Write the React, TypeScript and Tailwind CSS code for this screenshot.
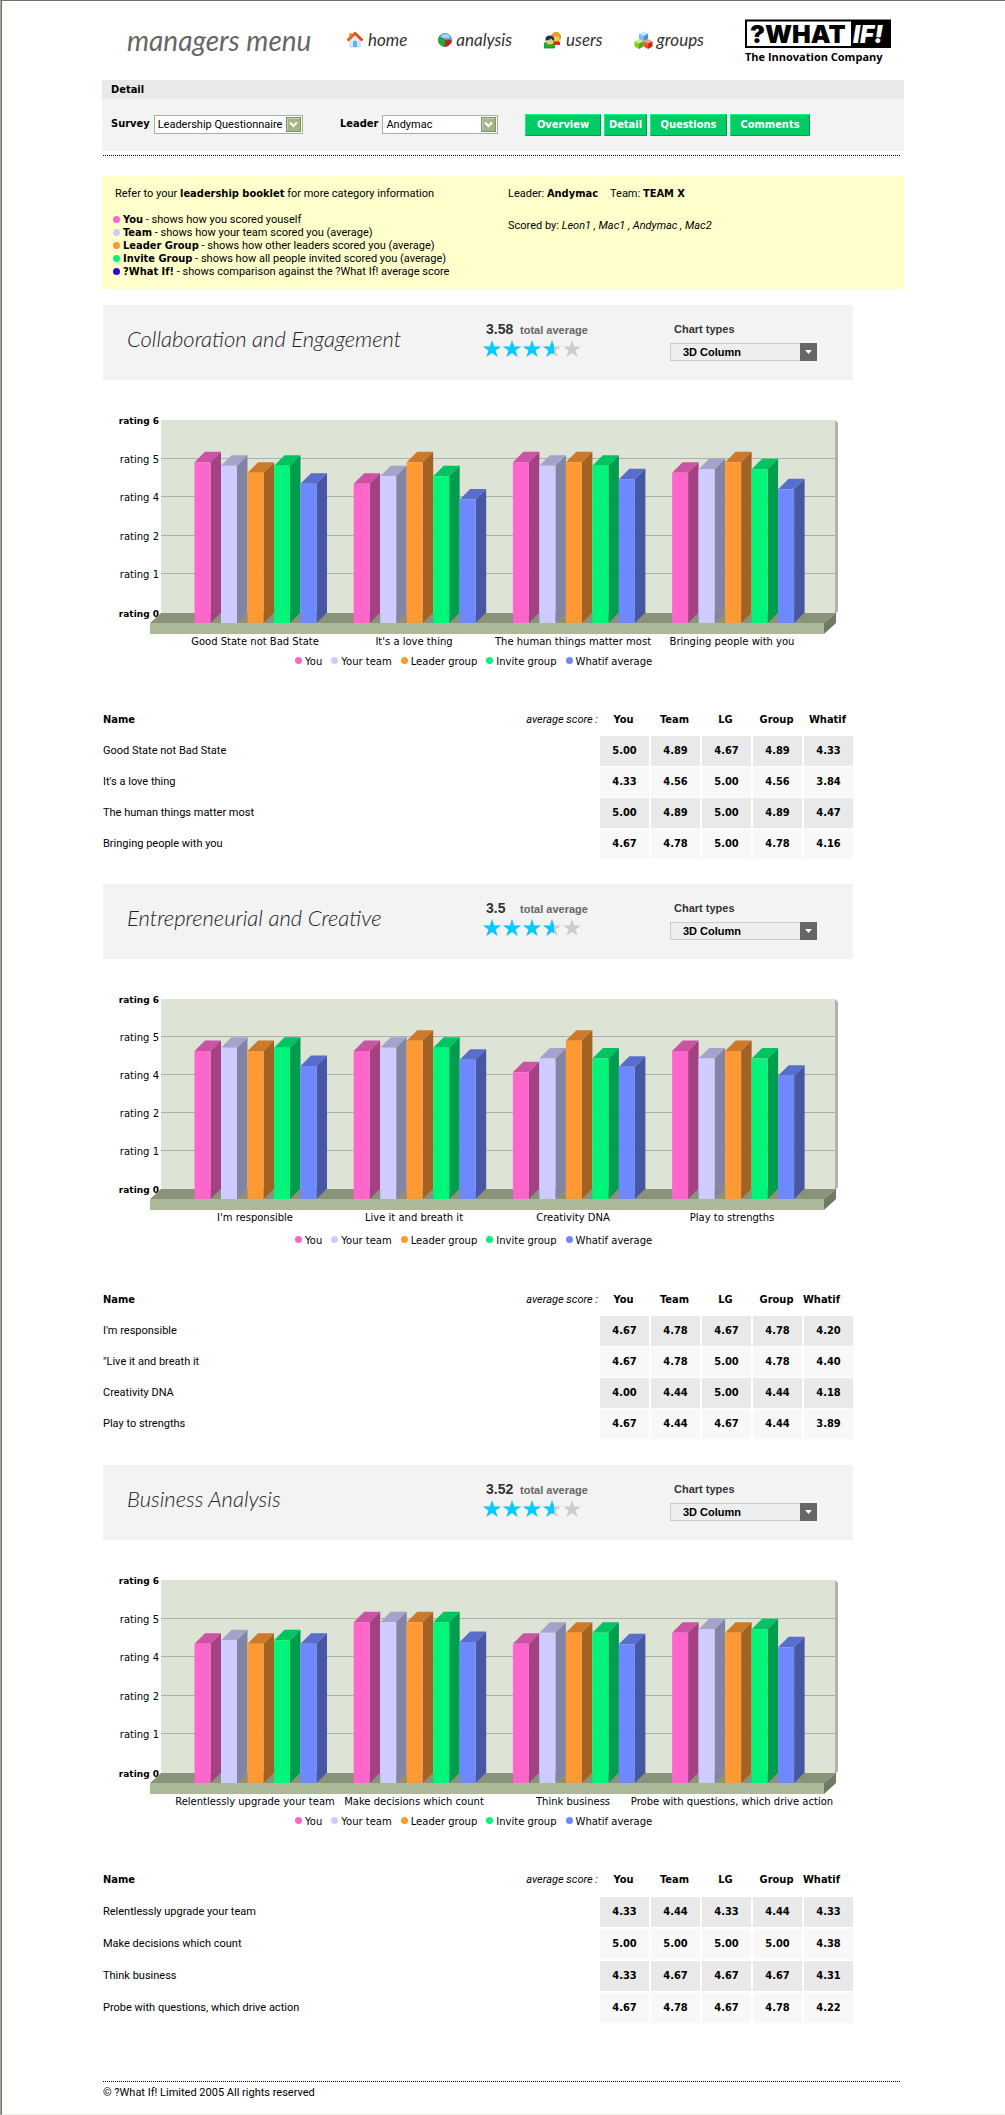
import type { ReactNode } from "react";

type Row = { name: string; label: string; values: number[] };
type Survey = {
  title: string;
  average: string;
  ceiling: number;
  rows: Row[];
  spacing: string;
  lastHead: string;
};

const series = [
  { name: "You", front: "#ff66cc", top: "#cc52a3", side: "#a34182" },
  { name: "Your team", front: "#ccccff", top: "#a3a3cc", side: "#8383a4" },
  { name: "Leader group", front: "#ff9933", top: "#cc7a29", side: "#a36221" },
  { name: "Invite group", front: "#00f57a", top: "#00c462", side: "#009d4e" },
  { name: "Whatif average", front: "#6e89ff", top: "#586ecc", side: "#4757a3" },
];

const surveys: Survey[] = [
  {
    title: "Collaboration and Engagement",
    average: "3.58",
    ceiling: 193,
    spacing: "mt-9 mb-6 border-spacing-y-px",
    lastHead: "",
    rows: [
      { name: "Good State not Bad State", label: "Good State not Bad State", values: [5, 4.89, 4.67, 4.89, 4.33] },
      { name: "It's a love thing", label: "It's a love thing", values: [4.33, 4.56, 5, 4.56, 3.84] },
      { name: "The human things matter most", label: "The human things matter most", values: [5, 4.89, 5, 4.89, 4.47] },
      { name: "Bringing people with you", label: "Bringing people with you", values: [4.67, 4.78, 5, 4.78, 4.16] },
    ],
  },
  {
    title: "Entrepreneurial and Creative",
    average: "3.5",
    ceiling: 190,
    spacing: "mt-[37px] mb-[25px] border-spacing-y-px",
    lastHead: "pr-3",
    rows: [
      { name: "I'm responsible", label: "I'm responsible", values: [4.67, 4.78, 4.67, 4.78, 4.2] },
      { name: "\"Live it and breath it", label: "Live it and breath it", values: [4.67, 4.78, 5, 4.78, 4.4] },
      { name: "Creativity DNA", label: "Creativity DNA", values: [4, 4.44, 5, 4.44, 4.18] },
      { name: "Play to strengths", label: "Play to strengths", values: [4.67, 4.44, 4.67, 4.44, 3.89] },
    ],
  },
  {
    title: "Business Analysis",
    average: "3.52",
    ceiling: 193,
    spacing: "mt-[35px] border-spacing-y-[2px]",
    lastHead: "pr-3",
    rows: [
      { name: "Relentlessly upgrade your team", label: "Relentlessly upgrade your team", values: [4.33, 4.44, 4.33, 4.44, 4.33] },
      { name: "Make decisions which count", label: "Make decisions which count", values: [5, 5, 5, 5, 4.38] },
      { name: "Think business", label: "Think business", values: [4.33, 4.67, 4.67, 4.67, 4.31] },
      { name: "Probe with questions, which drive action", label: "Probe with questions, which drive action", values: [4.67, 4.78, 4.67, 4.78, 4.22] },
    ],
  },
];

function Strong({ children }: { children: ReactNode }) {
  return <b className="font-['DejaVu_Sans_Condensed',sans-serif]">{children}</b>;
}

function HomeIcon() {
  return (
    <svg width="18" height="18" viewBox="0 0 18 18" aria-hidden="true">
      <path d="M3 2h3v5H3z" fill="#f0b429" />
      <path d="M4 9l5-5 5 5v7H4z" fill="#dfeaf6" stroke="#b9c8da" strokeWidth=".8" />
      <path d="M7 16v-4.5a2 2 0 0 1 4 0V16z" fill="#58b4ee" />
      <path d="M1.5 9.5L9 2.2l7.5 7.3" fill="none" stroke="#e8451a" strokeWidth="2.6" strokeLinejoin="round" />
      <path d="M2 8.6L9 2" stroke="#f58a3a" strokeWidth="1" />
    </svg>
  );
}

function PieIcon() {
  return (
    <svg width="14" height="16" viewBox="0 0 14 16" aria-hidden="true">
      <circle cx="7" cy="8" r="6.8" fill="#5cadea" />
      <path d="M7 8V14.8A6.8 6.8 0 0 1 1.2 4.5z" fill="#22b022" />
      <path d="M7 8h6.8A6.8 6.8 0 0 1 7 14.8z" fill="#e01515" />
      <path d="M1.2 4.5L7 8h6.8M7 8v6.8" fill="none" stroke="#35606c" strokeWidth=".6" />
      <ellipse cx="7.6" cy="4" rx="4.4" ry="2.2" fill="#b9e0fa" opacity=".8" />
      <circle cx="7" cy="8" r="6.5" fill="none" stroke="#3f7c9a" strokeWidth=".6" />
    </svg>
  );
}

function UsersIcon() {
  return (
    <svg width="19" height="18" viewBox="0 0 19 18" aria-hidden="true">
      <path d="M9 14v-3q4-3 8 0v3z" fill="#e3262a" />
      <circle cx="13" cy="6" r="4.6" fill="#fbd04a" stroke="#cf7d12" strokeWidth=".8" />
      <path d="M9 4q4-4.500 8 0l1 4q-3-4-9-2z" fill="#f39a1e" />
      <path d="M1.400 17v-5q5-3 10 0v5z" fill="#27ad27" stroke="#118a1d" strokeWidth=".8" />
      <circle cx="6.800" cy="9.500" r="4" fill="#fcc27c" />
      <path d="M2.400 9.500Q2 4.500 7 4.600q5 .4 4.200 5.400-2-.4-3-2.400-2 2-5.800 1.900z" fill="#17375e" />
    </svg>
  );
}

function Cube({ x, y, light, mid, dark }: { x: number; y: number; light: string; mid: string; dark: string }) {
  return (
    <g transform={`translate(${x} ${y})`}>
      <path d="M4.500 0L9 2.200 4.500 4.600 0 2.200z" fill={light} />
      <path d="M0 2.200l4.500 2.400V10L0 7.600z" fill={mid} />
      <path d="M9 2.200L4.500 4.600V10L9 7.600z" fill={dark} />
    </g>
  );
}

function GroupsIcon() {
  return (
    <svg width="19" height="19" viewBox="0 0 19 19" aria-hidden="true">
      <Cube x={5} y={0.5} light="#c4e6ff" mid="#7cbcf5" dark="#4b8fe0" />
      <Cube x={0.5} y={8} light="#c8f08a" mid="#7ed321" dark="#4fa90f" />
      <Cube x={9.5} y={8} light="#ff9c7c" mid="#f2502a" dark="#cc2a10" />
    </svg>
  );
}

function Logo() {
  return (
    <svg width="146" height="48" viewBox="0 0 146 48" role="img" aria-label="?What If! The Innovation Company">
      <rect x="1" y="1.500" width="144" height="26.500" fill="#fff" stroke="#000" strokeWidth="2" />
      <path d="M106 1h39v27h-39z" fill="#000" />
      <text x="5" y="24" fontFamily="Inter, sans-serif" fontWeight="900" fontSize="25">?WHAT</text>
      <text x="108" y="24" fontFamily="Inter, sans-serif" fontWeight="900" fontStyle="italic" fontSize="24" fill="#fff">IF!</text>
      <text x="0" y="42" fontFamily="'Open Sans', sans-serif" fontWeight="700" fontSize="11">The Innovation Company</text>
    </svg>
  );
}

const nav = [
  { name: "home", icon: <HomeIcon />, gap: "mr-[31px]" },
  { name: "analysis", icon: <PieIcon />, gap: "mr-[31px]" },
  { name: "users", icon: <UsersIcon />, gap: "mr-[31px]" },
  { name: "groups", icon: <GroupsIcon />, gap: "" },
];

function Header() {
  return (
    <header className="flex h-[79px] items-start pl-[25px]">
      <h1 className="mt-[22px] w-[219px] font-[Lato,sans-serif] text-[28px] leading-[34px] text-[#666] italic">managers menu</h1>
      <nav className="mt-[27px] flex flex-1 items-center">
        {nav.map((n) => (
          <a key={n.name} href={`#${n.name}`} className={`flex items-center gap-1 font-[Lato,sans-serif] text-[17px] leading-6 text-[#333] italic ${n.gap}`}>
            {n.icon}
            {n.name}
          </a>
        ))}
      </nav>
      <div className="mt-[18px] mr-[13px]">
        <Logo />
      </div>
    </header>
  );
}

function FilterSelect({ id, label, option, width }: { id: string; label: string; option: string; width: string }) {
  return (
    <div className="flex items-center gap-1">
      <label htmlFor={id} className="font-['DejaVu_Sans_Condensed',sans-serif] text-[11px] font-bold">{label}</label>
      <div className={`relative ${width}`}>
        <select id={id} className="block h-[19px] w-full appearance-none border border-[#a5b883] bg-white pl-[3px] font-[Roboto,sans-serif] text-[11px] leading-[16px]">
          <option>{option}</option>
        </select>
        <svg className="pointer-events-none absolute top-[2px] right-[2px]" width="15" height="15" viewBox="0 0 15 15" aria-hidden="true">
          <rect x=".5" y=".5" width="14" height="14" fill="#a3b583" stroke="#7f9468" />
          <path d="M1.500 13.500v-12h12" fill="none" stroke="#c3cfae" />
          <path d="M4 5.500l3.500 3.500L11 5.500" fill="none" stroke="#fff" strokeWidth="2.200" />
        </svg>
      </div>
    </div>
  );
}

const tabs = [
  { name: "Overview", width: "w-[76px]" },
  { name: "Detail", width: "w-[43px]" },
  { name: "Questions", width: "w-[77px]" },
  { name: "Comments", width: "w-[80px]" },
];

function Filters() {
  return (
    <section>
      <h2 className="h-[19px] bg-[#e9e9e9] pl-[9px] font-['DejaVu_Sans_Condensed',sans-serif] text-[11px] leading-5 font-bold">Detail</h2>
      <div className="flex h-[52px] items-start bg-[#f3f3f3] pt-[15px] pl-[9px]">
        <div className="w-[229px] pt-px">
          <FilterSelect id="survey" label="Survey" option="Leadership Questionnaire" width="w-[149px]" />
        </div>
        <div className="w-[185px] pt-px">
          <FilterSelect id="leader" label="Leader" option="Andymac" width="w-[116px]" />
        </div>
        <div className="flex gap-[3px]">
          {tabs.map((t) => (
            <button key={t.name} type="button" className={`h-[22px] border border-t-[#00ff80] border-r-[#009d55] border-b-[#009d55] border-l-[#00ff80] bg-[#00cc66] font-['DejaVu_Sans_Condensed',sans-serif] text-[11px] leading-[18px] font-bold text-white ${t.width}`}>
              {t.name}
            </button>
          ))}
        </div>
      </div>
      <div className="mt-1 mr-1 ml-px border-t border-dotted border-black" />
    </section>
  );
}

const key = [
  { color: "bg-[#ff66cc]", name: "You", text: "shows how you scored youself" },
  { color: "bg-[#ccccff]", name: "Team", text: "shows how your team scored you (average)" },
  { color: "bg-[#ff9933]", name: "Leader Group", text: "shows how other leaders scored you (average)" },
  { color: "bg-[#00f57a]", name: "Invite Group", text: "shows how all people invited scored you (average)" },
  { color: "bg-[#3300cc]", name: "?What If!", text: "shows comparison against the ?What If! average score" },
];

function Notes() {
  return (
    <section className="mt-5 flex h-[113px] bg-[#ffffcc] pt-[10px] pl-[11px] leading-4">
      <div className="w-[395px]">
        <p className="pl-[2px]">
          Refer to your <Strong>leadership booklet</Strong> for more category information
        </p>
        <ul className="mt-[11px]">
          {key.map((k) => (
            <li key={k.name} className="flex h-[13px] items-center leading-[13px]">
              <span className={`mr-[3px] size-[7px] rounded-full ${k.color}`} />
              <span>
                <Strong>{k.name}</Strong> - {k.text}
              </span>
            </li>
          ))}
        </ul>
      </div>
      <div>
        <p>
          Leader: <Strong>Andymac</Strong>
          <span className="ml-3">Team: </span>
          <Strong>TEAM X</Strong>
        </p>
        <p className="mt-4">
          Scored by: <i>Leon1 , Mac1 , Andymac , Mac2</i>
        </p>
      </div>
    </section>
  );
}

const star = "9,0 11.1,6.5 18,6.5 12.500,10.500 14.600,17 9,13 3.400,17 5.500,10.500 0,6.500 6.900,6.500";

function Stars() {
  return (
    <div className="flex gap-[2px]" role="img" aria-label="3.5 out of 5 stars">
      {[18, 18, 18, 11, 0].map((lit, i) => (
        <svg key={i} width="18" height="17" viewBox="0 0 18 17" aria-hidden="true">
          <polygon points={star} fill="#cccccc" />
          {lit > 0 && (
            <svg width={lit} height="17">
              <polygon points={star} fill="#00ccff" />
            </svg>
          )}
        </svg>
      ))}
    </div>
  );
}

function Chart({ survey }: { survey: Survey }) {
  const zero = 40 + survey.ceiling;
  const base = zero + 10;
  const names = ["6", "5", "4", "2", "1", "0"];
  return (
    <svg className="block w-full" viewBox="0 0 750 274" role="img" aria-label={`${survey.title} ratings`} fontFamily="'DejaVu Sans', sans-serif" fontSize="10">
      <path d={`M58 40h674v${zero - 40}H58z`} fill="#dde3d5" />
      <path d={`M732 40l3 3v${zero - 45}l-3 4z`} fill="#adb4a8" />
      {names.map((n, i) => {
        const edge = i === 0 || i === 5;
        const y = Math.round(40 + (survey.ceiling * i) / 5);
        return (
          <g key={n}>
            {!edge && <path d={`M58 ${y - 0.5}H732`} stroke="#a9b1ac" />}
            <text x="56" y={y + 4} textAnchor="end" fontWeight={edge ? "700" : "400"} fontSize={edge ? "9" : "10"}>
              rating {n}
            </text>
          </g>
        );
      })}
      <path d={`M58 ${zero}h675l-12 10H47z`} fill="#88937a" />
      <path d={`M47 ${base}h674v11H47z`} fill="#acb999" />
      <path d={`M733 ${zero}v10l-12 11v-11z`} fill="#6f7963" />
      {survey.rows.map((row, g) => (
        <g key={row.name}>
          {row.values.map((v, s) => {
            const x = 91.5 + g * 159.2 + s * 26.5;
            const top = base - (v * survey.ceiling) / 6;
            const c = series[s];
            return (
              <g key={s}>
                <path d={`M${x} ${top}l10.5 -10.5h16l-10.5 10.5z`} fill={c.top} />
                <path d={`M${x + 16} ${top}l10.5 -10.5V${base - 10.5}L${x + 16} ${base}z`} fill={c.side} />
                <path d={`M${x} ${top}h16V${base}h-16z`} fill={c.front} />
              </g>
            );
          })}
          <text x={152 + g * 159} y={base + 22} textAnchor="middle">
            {row.label}
          </text>
        </g>
      ))}
    </svg>
  );
}

const legend = [
  { name: "You", dot: "bg-[#ff66cc]" },
  { name: "Your team", dot: "bg-[#ccccff]" },
  { name: "Leader group", dot: "bg-[#ff9933]" },
  { name: "Invite group", dot: "bg-[#00f57a]" },
  { name: "Whatif average", dot: "bg-[#6e89ff]" },
];

function ScoreTable({ survey }: { survey: Survey }) {
  return (
    <table className={`w-full table-fixed border-separate border-spacing-x-0 ${survey.spacing}`}>
      <colgroup>
        <col />
        <col className="w-[120px]" />
        <col className="w-[51px]" />
        <col className="w-[51px]" />
        <col className="w-[51px]" />
        <col className="w-[51px]" />
        <col className="w-[51px]" />
      </colgroup>
      <thead>
        <tr className="h-[30px] font-['DejaVu_Sans_Condensed',sans-serif] text-[11px]">
          <th scope="col" className="text-left">Name</th>
          <th scope="col" className="text-right font-[Roboto,sans-serif] font-normal italic">average score :</th>
          <th scope="col">You</th>
          <th scope="col">Team</th>
          <th scope="col">LG</th>
          <th scope="col">Group</th>
          <th scope="col" className={survey.lastHead}>Whatif</th>
        </tr>
      </thead>
      <tbody>
        {survey.rows.map((row, r) => (
          <tr key={row.name} className="h-[30px]">
            <th scope="row" colSpan={2} className="text-left font-normal">{row.name}</th>
            {row.values.map((v, i) => (
              <td key={i} className={`border-l-2 border-white text-center font-['DejaVu_Sans_Condensed',sans-serif] text-[11px] font-bold ${r % 2 ? "bg-[#f8f8f8]" : "bg-[#e9e9e9]"}`}>
                {v.toFixed(2)}
              </td>
            ))}
          </tr>
        ))}
      </tbody>
    </table>
  );
}

function SurveySection({ survey, index }: { survey: Survey; index: number }) {
  const id = `chart-type-${index}`;
  return (
    <section>
      <div className="grid h-[75px] grid-cols-[380fr_187fr_183fr] items-start bg-[#f3f3f3] font-['Liberation_Sans',sans-serif]">
        <h2 className="pt-5 pl-6 font-[Lato,sans-serif] text-[22px] leading-7 font-light whitespace-nowrap text-[#222] italic">{survey.title}</h2>
        <div className="pt-4">
          <p className="flex h-[19px] items-baseline pl-[3px] leading-4">
            <b className="w-[34px] text-[14px] text-[#333]">{survey.average}</b>
            <span className="text-[11px] font-bold text-[#666]">total average</span>
          </p>
          <Stars />
        </div>
        <div className="pt-4">
          <label htmlFor={id} className="block pl-1 text-[11px] leading-4 font-bold text-[#333]">Chart types</label>
          <div className="relative mt-[6px] w-[147px]">
            <select id={id} className="block h-[18px] w-full appearance-none border border-[#ccc] bg-[#eee] pl-3 text-[11px] leading-4 font-bold">
              <option>3D Column</option>
            </select>
            <span className="pointer-events-none absolute top-0 right-0 flex h-[18px] w-[17px] items-center justify-center bg-[#666]">
              <svg width="7" height="4" viewBox="0 0 7 4" aria-hidden="true">
                <path d="M0 0h7L3.500 4z" fill="#fff" />
              </svg>
            </span>
          </div>
        </div>
      </div>
      <Chart survey={survey} />
      <ul className="flex h-[14px] items-center gap-[9px] pt-px pl-48 font-['DejaVu_Sans',sans-serif] text-[10px] leading-[14px]">
        {legend.map((l) => (
          <li key={l.name} className="flex items-center gap-[3px]">
            <span className={`mb-[3px] size-[7px] rounded-full ${l.dot}`} />
            {l.name}
          </li>
        ))}
      </ul>
      <ScoreTable survey={survey} />
    </section>
  );
}

export default function App() {
  return (
    <div className="border-t border-l border-t-[#716f64] border-l-[#aca899] bg-white">
      <div className="border-b border-l border-b-[#f1efe2] border-l-[#716f64] pr-[101px] pb-[13px] pl-[100px] font-[Roboto,sans-serif] text-[11px] text-black">
        <Header />
        <Filters />
        <Notes />
        <main className="mt-4 mr-[51px] ml-px">
          {surveys.map((s, i) => (
            <SurveySection key={s.title} survey={s} index={i} />
          ))}
        </main>
        <footer className="mt-14 mr-1 ml-px border-t border-dotted border-black pt-[3px] leading-4">© ?What If! Limited 2005 All rights reserved</footer>
      </div>
    </div>
  );
}
